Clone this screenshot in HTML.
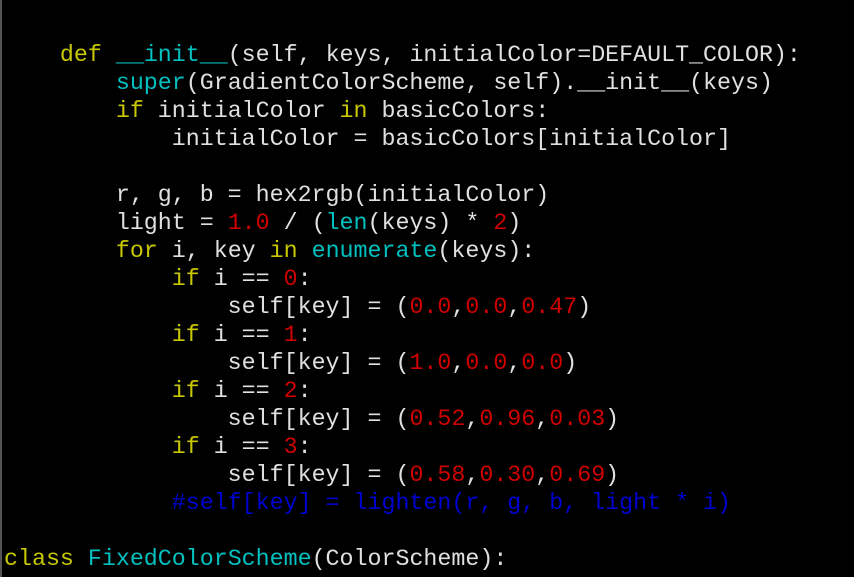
<html><head><style>
body{margin:0;background:#000;width:854px;height:577px;overflow:hidden;border-left:2px solid #555;box-sizing:border-box}
pre{margin:0;padding:41px 0 0 2px;font-family:"Liberation Mono",monospace;font-size:23.3px;line-height:28px;color:#e0e0e0}
.k{color:#c8c800}.c{color:#00c0c0}.n{color:#d00000}.m{color:#0000d0}
</style></head><body><pre>    <span class="k">def</span> <span class="c">__init__</span>(self, keys, initialColor=DEFAULT_COLOR):
        <span class="c">super</span>(GradientColorScheme, self).__init__(keys)
        <span class="k">if</span> initialColor <span class="k">in</span> basicColors:
            initialColor = basicColors[initialColor]

        r, g, b = hex2rgb(initialColor)
        light = <span class="n">1.0</span> / (<span class="c">len</span>(keys) * <span class="n">2</span>)
        <span class="k">for</span> i, key <span class="k">in</span> <span class="c">enumerate</span>(keys):
            <span class="k">if</span> i == <span class="n">0</span>:
                self[key] = (<span class="n">0.0</span>,<span class="n">0.0</span>,<span class="n">0.47</span>)
            <span class="k">if</span> i == <span class="n">1</span>:
                self[key] = (<span class="n">1.0</span>,<span class="n">0.0</span>,<span class="n">0.0</span>)
            <span class="k">if</span> i == <span class="n">2</span>:
                self[key] = (<span class="n">0.52</span>,<span class="n">0.96</span>,<span class="n">0.03</span>)
            <span class="k">if</span> i == <span class="n">3</span>:
                self[key] = (<span class="n">0.58</span>,<span class="n">0.30</span>,<span class="n">0.69</span>)
            <span class="m">#self[key] = lighten(r, g, b, light * i)</span>

<span class="k">class</span> <span class="c">FixedColorScheme</span>(ColorScheme):
</pre></body></html>
